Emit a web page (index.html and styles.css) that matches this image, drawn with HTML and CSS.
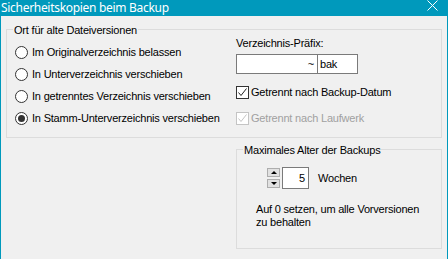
FILE: index.html
```html
<!DOCTYPE html>
<html lang="de">
  <head>
    <meta charset="UTF-8" />
    <meta name="viewport" content="width=device-width, initial-scale=1.0" />
    <title>Sicherheitskopien beim Backup</title>
    <link rel="stylesheet" href="styles.css">
  </head>
  <body>
    <div class="window">
      <div class="titlebar">
        <span class="title">Sicherheitskopien beim Backup</span>
        <svg class="close" width="11" height="11" viewBox="0 0 11 11">
          <path d="M0.5 0.5 L10.5 10.5 M10.5 0.5 L0.5 10.5" stroke="#fff" stroke-width="1" fill="none" />
        </svg>
      </div>

      <div class="client">
        <fieldset class="group">
          <legend>Ort für alte Dateiversionen</legend>
          <div class="place-body">
            <div class="radios">
              <label class="radio"><span class="dot"></span>Im Originalverzeichnis belassen</label>
              <label class="radio"><span class="dot"></span>In Unterverzeichnis verschieben</label>
              <label class="radio"><span class="dot"></span>In getrenntes Verzeichnis verschieben</label>
              <label class="radio"><span class="dot checked"></span>In Stamm-Unterverzeichnis verschieben</label>
            </div>
            <div class="options">
              <div class="field-label">Verzeichnis-Präfix:</div>
              <div class="prefix">
                <span class="prefix-left">~</span>
                <span class="prefix-right">bak</span>
              </div>
              <label class="check first">
                <span class="box">
                  <svg width="11" height="11" viewBox="0 0 11 11"><path d="M1.5 5.5 L4 8.5 L9.5 1.5" stroke="#222" stroke-width="1" fill="none" /></svg>
                </span>
                Getrennt nach Backup-Datum
              </label>
              <label class="check disabled">
                <span class="box">
                  <svg width="11" height="11" viewBox="0 0 11 11"><path d="M1.5 5.5 L4 8.5 L9.5 1.5" stroke="#c4c4c4" stroke-width="1" fill="none" /></svg>
                </span>
                Getrennt nach Laufwerk
              </label>
            </div>
          </div>
        </fieldset>

        <fieldset class="group age">
          <legend>Maximales Alter der Backups</legend>
          <div class="spin-row">
            <div class="spin">
              <span class="spin-btn"><span class="tri-up"></span></span>
              <span class="spin-btn"><span class="tri-down"></span></span>
            </div>
            <span class="num">5</span>
            <span class="unit">Wochen</span>
          </div>
          <p class="hint">Auf 0 setzen, um alle Vorversionen<br>zu behalten</p>
        </fieldset>
      </div>
    </div>
  </body>
</html>
```

FILE: styles.css
```css
body {
  margin: 0;
  background-color: #f0f0f0;
}

.window {
  width: 448px;
  height: 259px;
  box-sizing: border-box;
  border-left: 1px solid #0099bc;
  border-right: 1px solid #0099bc;
  background-color: #f0f0f0;
  font-family: "Liberation Sans", Arial, sans-serif;
  font-size: 11px;
  letter-spacing: -0.2px;
  color: #000;
  overflow: hidden;
}

.titlebar {
  height: 16px;
  background-color: #0099bc;
  display: flex;
  justify-content: space-between;
  align-items: flex-start;
}
.title {
  font-family: "Noto Sans", sans-serif;
  font-size: 12px;
  letter-spacing: -0.3px;
  line-height: 14px;
  padding-top: 1px;
  color: #fff;
}
.close {
  margin-right: 9px;
}

.client {
  padding: 5px 5px 0 5px;
}

.group {
  margin: 0;
  padding: 0;
  border: 1px solid #dcdcdc;
  min-width: 0;
}
.group legend {
  margin-left: 6px;
  padding: 3px 1px 0 1px;
  line-height: 13px;
}

.place-body {
  display: grid;
  grid-template-columns: 221px 1fr;
  padding: 0 8px 8px 8px;
}

.radios {
  padding-top: 4px;
}
.radio {
  display: flex;
  align-items: center;
  height: 22px;
}
.dot {
  width: 11px;
  height: 11px;
  border: 1px solid #333;
  border-radius: 50%;
  background-color: #fff;
  margin-right: 4px;
  display: flex;
  align-items: center;
  justify-content: center;
}
.dot.checked::after {
  content: "";
  width: 7px;
  height: 7px;
  border-radius: 50%;
  background-color: #333;
}

.field-label {
  line-height: 13px;
}
.prefix {
  display: flex;
  margin-top: 4px;
  width: 122px;
  height: 20px;
  box-sizing: border-box;
  border: 1px solid #7a7a7a;
  background-color: #fff;
  line-height: 18px;
}
.prefix-left {
  width: 80px;
  text-align: right;
  padding-right: 3px;
  box-sizing: border-box;
}
.prefix-right {
  flex: 1;
  border-left: 1px solid #7a7a7a;
  padding-left: 2px;
}

.check {
  display: flex;
  align-items: center;
  height: 22px;
}
.check.first {
  margin-top: 7px;
}
.check.disabled {
  margin-top: 4px;
  color: #a0a0a0;
}
.box {
  width: 11px;
  height: 11px;
  border: 1px solid #333;
  background-color: #fff;
  margin-right: 2px;
  display: flex;
}
.check.disabled .box {
  border-color: #c4c4c4;
}

.age {
  margin: 3px 0 0 230px;
  padding: 0 0 19px 0;
}

.spin-row {
  display: flex;
  align-items: center;
  margin-top: 10px;
  padding-left: 30px;
}
.spin {
  display: flex;
  flex-direction: column;
  gap: 2px;
  margin-right: 2px;
}
.spin-btn {
  width: 11px;
  height: 7px;
  border: 1px solid #adadad;
  background-color: #e1e1e1;
  display: flex;
  align-items: center;
  justify-content: center;
}
.tri-up {
  border-left: 3px solid transparent;
  border-right: 3px solid transparent;
  border-bottom: 3px solid #000;
}
.tri-down {
  border-left: 3px solid transparent;
  border-right: 3px solid transparent;
  border-top: 3px solid #000;
}
.num {
  width: 27px;
  height: 22px;
  box-sizing: border-box;
  border: 1px solid #7a7a7a;
  background-color: #fff;
  text-align: right;
  padding-right: 3px;
  line-height: 20px;
}
.unit {
  margin-left: 9px;
}

.hint {
  margin: 14px 0 0 19px;
  line-height: 13px;
}
```
